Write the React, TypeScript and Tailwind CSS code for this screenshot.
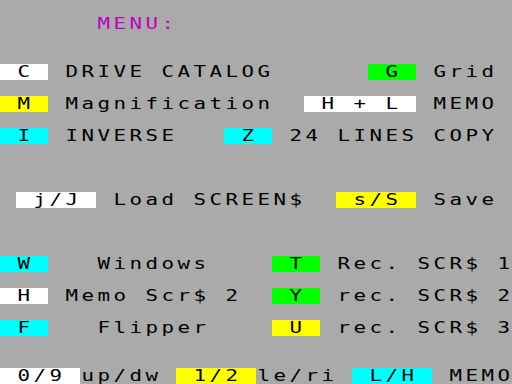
import React from "react";

type Seg = { c: number; t: string; bg?: string; fg?: string };

const WHITE = "bg-[#ffffff]";
const YELLOW = "bg-[#ffff00]";
const CYAN = "bg-[#00ffff]";
const GREEN = "bg-[#00ff00]";

// screen rows (0-23), segments placed on the 32-column character grid
const screen: Record<number, Seg[]> = {
  1: [{ c: 6, t: "MENU:", fg: "text-[#c000c0]" }],
  4: [
    { c: 0, t: " C ", bg: WHITE },
    { c: 4, t: "DRIVE CATALOG" },
    { c: 23, t: " G ", bg: GREEN },
    { c: 27, t: "Grid" },
  ],
  6: [
    { c: 0, t: " M ", bg: YELLOW },
    { c: 4, t: "Magnification" },
    { c: 19, t: " H + L ", bg: WHITE },
    { c: 27, t: "MEMO" },
  ],
  8: [
    { c: 0, t: " I ", bg: CYAN },
    { c: 4, t: "INVERSE" },
    { c: 14, t: " Z ", bg: CYAN },
    { c: 18, t: "24 LINES COPY" },
  ],
  12: [
    { c: 1, t: " j/J ", bg: WHITE },
    { c: 7, t: "Load SCREEN$" },
    { c: 21, t: " s/S ", bg: YELLOW },
    { c: 27, t: "Save" },
  ],
  16: [
    { c: 0, t: " W ", bg: CYAN },
    { c: 6, t: "Windows" },
    { c: 17, t: " T ", bg: GREEN },
    { c: 21, t: "Rec. SCR$ 1" },
  ],
  18: [
    { c: 0, t: " H ", bg: WHITE },
    { c: 4, t: "Memo Scr$ 2" },
    { c: 17, t: " Y ", bg: GREEN },
    { c: 21, t: "rec. SCR$ 2" },
  ],
  20: [
    { c: 0, t: " F ", bg: CYAN },
    { c: 6, t: "Flipper" },
    { c: 17, t: " U ", bg: YELLOW },
    { c: 21, t: "rec. SCR$ 3" },
  ],
  23: [
    { c: 0, t: " 0/9 ", bg: WHITE },
    { c: 5, t: "up/dw" },
    { c: 11, t: " 1/2 ", bg: YELLOW },
    { c: 16, t: "le/ri" },
    { c: 22, t: " L/H ", bg: CYAN },
    { c: 28, t: "MEMO" },
  ],
};

type Cell = { ch: string; bg: string; fg: string };

function buildRow(segs: Seg[] = []): Cell[] {
  const row: Cell[] = Array.from({ length: 32 }, () => ({
    ch: " ",
    bg: "",
    fg: "text-black",
  }));
  segs.forEach((s) => {
    s.t.split("").forEach((ch, i) => {
      const cell = row[s.c + i];
      if (!cell) return;
      cell.ch = ch;
      cell.bg = s.bg ?? "";
      cell.fg = s.fg ?? "text-black";
    });
  });
  return row;
}

export default function App() {
  return (
    <div
      className="w-[512px] h-[384px] bg-[#aaaaaa] flex flex-col overflow-hidden"
      style={{ fontFamily: '"DejaVu Sans Mono", "Liberation Mono", monospace' }}
    >
      {Array.from({ length: 24 }, (_, r) => (
        <div key={r} className="flex h-4">
          {buildRow(screen[r]).map((cell, i) => (
            <span
              key={i}
              className={`w-4 h-4 flex justify-center text-[16px] leading-4 whitespace-pre ${cell.bg} ${cell.fg}`}
            >
              <span className="inline-block scale-x-[1.3]">{cell.ch}</span>
            </span>
          ))}
        </div>
      ))}
    </div>
  );
}
